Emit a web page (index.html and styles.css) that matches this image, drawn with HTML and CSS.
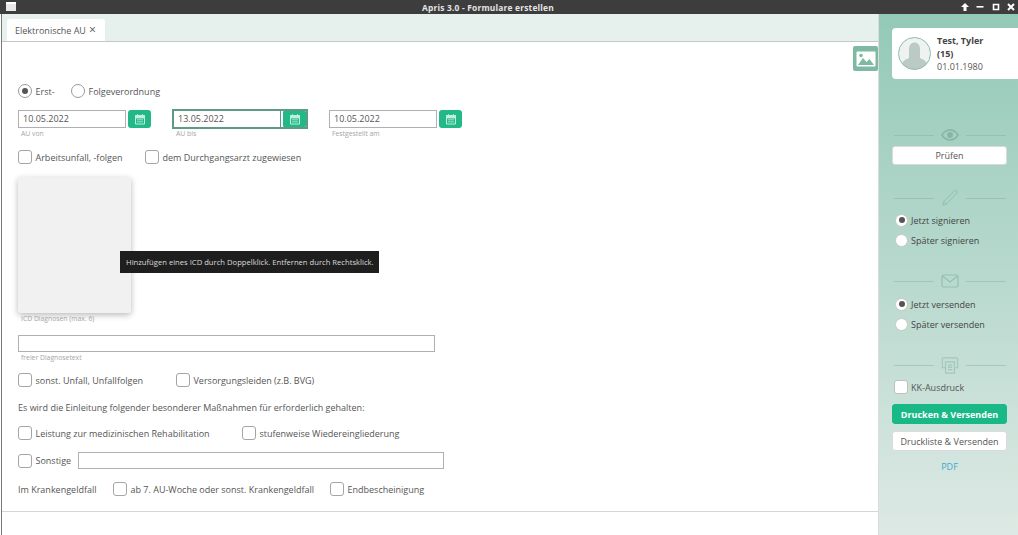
FILE: index.html
```html
<!DOCTYPE html>
<html lang="de">
<head>
<meta charset="utf-8">
<title>Apris 3.0 - Formulare erstellen</title>
<link rel="stylesheet" href="styles.css">
</head>
<body>
<header class="titlebar">
  <span class="win-icon"></span>
  <span class="win-title">Apris 3.0 - Formulare erstellen</span>
  <div class="win-controls">
    <svg width="10" height="10" viewBox="0 0 10 10"><path d="M5 1 9 5H6.500V9h-3V5H1z" fill="#fff"/></svg>
    <svg width="10" height="10" viewBox="0 0 10 10"><rect x="1.500" y="4" width="7" height="1.600" fill="#fff"/></svg>
    <svg width="10" height="10" viewBox="0 0 10 10"><path d="M2.500 2.500h5v5h-5z" fill="none" stroke="#fff" stroke-width="1.600"/></svg>
    <svg width="10" height="10" viewBox="0 0 10 10"><path d="M2 2 8 8M8 2 2 8" stroke="#fff" stroke-width="2"/></svg>
  </div>
</header>
<div class="app">
  <main class="main">
    <div class="tabbar"><div class="tab">Elektronische AU <span class="tab-x">×</span></div></div>
    <div class="form">
      <button class="image-btn" aria-label="Bild">
        <svg width="20" height="16" viewBox="0 0 20 16"><rect x="0.500" y="0.500" width="19" height="15" rx="1" fill="#fff"/><path d="M2 14 7 7l3.500 4 3-3L18 14z" fill="#7fb9a4"/><circle cx="5" cy="4.500" r="1.800" fill="#7fb9a4"/></svg>
      </button>

      <div class="row row-radio">
        <label class="opt w-53"><span class="radio on"></span>Erst-</label>
        <label class="opt"><span class="radio"></span>Folgeverordnung</label>
      </div>

      <div class="row row-dates">
        <div class="date">
          <div class="date-line"><div class="input date-input">10.05.2022</div><span class="cal"><svg width="12" height="12" viewBox="0 0 12 12"><use href="#cal"/></svg></span></div>
          <div class="caption">AU von</div>
        </div>
        <div class="date date-focus">
          <div class="date-line focus"><div class="input date-input">13.05.2022</div><span class="cal"><svg width="12" height="12" viewBox="0 0 12 12"><use href="#cal"/></svg></span></div>
          <div class="caption">AU bis</div>
        </div>
        <div class="date date-third">
          <div class="date-line"><div class="input date-input">10.05.2022</div><span class="cal"><svg width="12" height="12" viewBox="0 0 12 12"><use href="#cal"/></svg></span></div>
          <div class="caption">Festgestellt am</div>
        </div>
      </div>

      <div class="row row-check1">
        <label class="opt w-127"><span class="check"></span>Arbeitsunfall, -folgen</label>
        <label class="opt"><span class="check"></span>dem Durchgangsarzt zugewiesen</label>
      </div>

      <div class="icd"></div>
      <div class="caption caption-icd">ICD Diagnosen (max. 6)</div>

      <div class="input free-input"></div>
      <div class="caption">freier Diagnosetext</div>

      <div class="row row-check2">
        <label class="opt w-158"><span class="check"></span>sonst. Unfall, Unfallfolgen</label>
        <label class="opt"><span class="check"></span>Versorgungsleiden (z.B. BVG)</label>
      </div>

      <p class="statement">Es wird die Einleitung folgender besonderer Maßnahmen für erforderlich gehalten:</p>

      <div class="row row-check3">
        <label class="opt w-224"><span class="check"></span>Leistung zur medizinischen Rehabilitation</label>
        <label class="opt"><span class="check"></span>stufenweise Wiedereingliederung</label>
      </div>

      <div class="row row-check4">
        <label class="opt w-60"><span class="check"></span>Sonstige</label>
        <div class="input other-input"></div>
      </div>

      <div class="row row-check5">
        <span class="kg-label">Im Krankengeldfall</span>
        <label class="opt w-217"><span class="check"></span>ab 7. AU-Woche oder sonst. Krankengeldfall</label>
        <label class="opt"><span class="check"></span>Endbescheinigung</label>
      </div>

      <div class="tooltip">Hinzufügen eines ICD durch Doppelklick. Entfernen durch Rechtsklick.</div>
    </div>
    <div class="footer-line"></div>
  </main>

  <aside class="side">
    <div class="patient">
      <svg class="avatar" width="33" height="33" viewBox="0 0 33 33"><defs><clipPath id="av"><circle cx="16.500" cy="16.500" r="16"/></clipPath></defs><circle cx="16.500" cy="16.500" r="16" fill="#eef3f1"/><g clip-path="url(#av)" fill="#bccac5"><path d="M11 21v-9c0-4 2.500-6.500 5.500-6.500S22 8 22 12v9z"/><ellipse cx="16.500" cy="29" rx="13" ry="9"/></g><circle cx="16.500" cy="16.500" r="16" fill="none" stroke="#8dbcab"/></svg>
      <div class="patient-text"><b>Test, Tyler</b><b>(15)</b><span>01.01.1980</span></div>
    </div>

    <div class="divider d-eye"><svg width="18" height="14" viewBox="0 0 20 14" fill="none" stroke="#86b5a4" stroke-width="1.600"><path d="M1 7c2.500-3.700 5.500-5.500 9-5.500S16.500 3.300 19 7c-2.500 3.700-5.500 5.500-9 5.500S3.500 10.700 1 7z"/><circle cx="10" cy="7" r="3.200" fill="#86b5a4" stroke="none"/></svg></div>
    <button class="btn btn-check">Prüfen</button>

    <div class="divider d-pen"><svg width="18" height="18" viewBox="0 0 18 18" fill="none" stroke="#93c0b0" stroke-width="1"><path d="M13.500 1.500c.8-.6 1.500-.5 2.200.2s.8 1.500.2 2.200L5.500 15l-3.800 1.300L2.900 12.500z"/><path d="M2.900 12.500 5.500 15"/></svg></div>
    <label class="opt side-opt first"><span class="radio on"></span>Jetzt signieren</label>
    <label class="opt side-opt"><span class="radio"></span>Später signieren</label>

    <div class="divider d-mail"><svg width="18" height="14" viewBox="0 0 18 14" fill="none" stroke="#93c0b0" stroke-width="1.200"><rect x="1" y="1" width="16" height="12" rx="1.500"/><path d="M1.500 2 9 8l7.500-6"/></svg></div>
    <label class="opt side-opt first"><span class="radio on"></span>Jetzt versenden</label>
    <label class="opt side-opt"><span class="radio"></span>Später versenden</label>

    <div class="divider d-print"><svg width="18" height="19" viewBox="0 0 20 19" fill="none" stroke="#a3c8ba" stroke-width="1.300"><path d="M5 12H1.500V2.500c0-1 .5-1.500 1.500-1.500h14c1 0 1.500.5 1.500 1.500V12H15"/><path d="M5 5.500h10V18H5z"/><path d="M7.500 9h5M7.500 11.500h5M7.500 14h5"/></svg></div>
    <label class="opt kk"><span class="check"></span>KK-Ausdruck</label>
    <button class="btn btn-primary">Drucken &amp; Versenden</button>
    <button class="btn btn-list">Druckliste &amp; Versenden</button>
    <a class="pdf">PDF</a>
  </aside>
</div>
<svg class="defs" width="0" height="0"><symbol id="cal" viewBox="0 0 12 12"><path d="M1.500 2.500h9v8.500h-9z" fill="none" stroke="#bff0dc" stroke-width="1"/><path d="M1.500 2.500h9V5h-9zM3.500 1v2M8.500 1v2" fill="#bff0dc" stroke="#bff0dc" stroke-width=".8"/><path d="M3 6.800h6M3 8.800h6" stroke="#bff0dc" stroke-width=".8"/></symbol></svg>
</body>
</html>
```
FILE: styles.css
```css
* { box-sizing: border-box; }
html, body { margin: 0; height: 535px; overflow: hidden; }
body { font-family: "Open Sans", sans-serif; font-size: 9px; color: #555; background: #fff; }

.titlebar { height: 14px; background: #3d3d3d; display: flex; align-items: center; justify-content: center; position: relative; color: #e4e4e4; padding-right: 42px; }
.win-title { font-weight: 700; font-size: 8.400px; letter-spacing: .2px; }
.win-icon { position: absolute; left: 6px; top: 2px; width: 10px; height: 9px; background: #e8e8e8; border-top: 2px solid #fff; }
.win-controls { position: absolute; right: 2px; top: 2px; display: flex; gap: 5.500px; }

.app { display: flex; height: 521px; }
.main { flex: 0 0 878px; margin-left: 1px; border-left: 1px solid #777; border-right: 1px solid #dcdcdc; display: flex; flex-direction: column; }
.tabbar { height: 28px; background: #e6f0ec; border-bottom: 1px solid #c6c6c6; padding: 5px 0 0 5px; }
.tab { width: 98px; height: 22px; background: #fff; border-radius: 3px 3px 0 0; display: flex; align-items: center; gap: 3px; padding-left: 8px; }
.tab-x { font-size: 12px; line-height: 12px; }

.form { position: relative; flex: none; height: 469px; padding: 43px 0 0 16px; }
.row { display: flex; align-items: center; }
.opt { display: inline-flex; align-items: center; gap: 3.500px; white-space: nowrap; }
.radio { width: 14px; height: 14px; border-radius: 50%; background: #fff; border: 1px solid #9a9a9a; flex: none; display: flex; align-items: center; justify-content: center; }
.radio.on::after { content: ""; width: 6px; height: 6px; border-radius: 50%; background: #555; }
.check { width: 14px; height: 14px; border-radius: 3px; background: #fff; border: 1px solid #a5a5a5; flex: none; }

.image-btn { position: absolute; left: 851px; top: 4px; width: 25px; height: 25px; padding: 0; border: 0; border-radius: 2px; background: #7fb9a4; display: flex; align-items: center; justify-content: center; }

.row-radio { height: 14px; margin-top: -1px; }
.w-53 { width: 53px; }

.row-dates { margin-top: 12px; }
.date { width: 133px; }
.date-focus { width: 134px; margin-left: 22px; }
.date-third { margin-left: 22px; }
.date-line { display: flex; gap: 2px; height: 18px; }
.date-input { width: 108px; height: 18px; padding-left: 4px; }
.input { background: #fff; border: 1px solid #b0b0b0; line-height: 16px; color: #555; }
.cal { width: 23px; height: 18px; background: #22b888; border-radius: 3px; display: flex; align-items: center; justify-content: center; }
.focus { outline: 2px solid #5f9a84; outline-offset: -1px; }
.focus .date-input { border-color: #5f9a84; }
.caption { font-size: 6.800px; line-height: 9px; color: #a5a5a5; padding-left: 3px; margin-top: 1px; }

.row-check1 { height: 14px; margin-top: 12px; }
.w-127 { width: 127px; }
.w-158 { width: 158px; }
.w-224 { width: 224px; }
.w-217 { width: 217px; }
.w-60 { width: 60px; }

.icd { width: 113px; height: 136px; margin-top: 13px; background: #f1f1f1; border-radius: 3px; box-shadow: 0 2px 6px rgba(0,0,0,.28); }
.caption-icd { margin-top: 1px; }

.free-input { width: 417px; height: 17px; margin-top: 12px; }

.row-check2 { height: 14px; margin-top: 11px; }
.statement { margin: 14px 0 0; line-height: 14px; }
.row-check3 { height: 14px; margin-top: 11px; }
.row-check4 { height: 17px; margin-top: 12px; }
.other-input { width: 366px; height: 17px; }
.row-check5 { height: 14px; margin-top: 13px; }
.kg-label { width: 95px; }

.tooltip { position: absolute; left: 118px; top: 209px; height: 22px; padding: 0 5px 0 6px; background: #1e1e1e; color: #dcdcdc; font-size: 7.650px; line-height: 22px; white-space: nowrap; }
.footer-line { border-top: 1px solid #d6d6d6; }
.defs { position: absolute; }

.side { flex: 1; background: linear-gradient(#93c9b7, #dde9e4); display: flex; flex-direction: column; align-items: flex-start; padding: 14px 0 0 13px; }
.patient { align-self: stretch; height: 51px; background: #fff; border-radius: 4px 0 0 4px; display: flex; align-items: center; gap: 6px; padding-left: 6px; }
.avatar { flex: none; }
.patient-text { display: flex; flex-direction: column; line-height: 13px; }
.patient-text b { color: #444; font-weight: 700; }

.divider { width: 115px; display: flex; align-items: center; justify-content: center; gap: 7px; flex: none; }
.divider::before, .divider::after { content: ""; width: 40px; height: 1px; background: rgba(110,165,145,.35); }
.d-eye { height: 14px; margin-top: 49px; }
.d-pen { height: 26px; margin-top: 20px; }
.d-mail { height: 14px; margin-top: 24px; }
.d-print { height: 19px; margin-top: 22px; }

.btn { font-family: inherit; font-size: 9px; border-radius: 3px; border: 1px solid #dadada; background: #fff; color: #555; width: 115px; padding: 0; flex: none; }
.btn-check { height: 19px; margin-top: 4px; }
.btn-primary { height: 20px; margin-top: 10px; background: #18b987; border-color: #18b987; color: #fff; font-weight: 700; }
.btn-list { height: 20px; margin-top: 7px; }

.side-opt { height: 20px; color: #444; gap: 3px; }
.side-opt .radio { border-color: #c8c8c8; width: 13px; height: 13px; margin-left: 3px; }
.first { margin-top: -1px; }
.d-mail + .first { margin-top: 6px; }
.kk { height: 14px; margin-top: 5px; margin-left: 2px; gap: 3px; }
.kk .check { border-color: #c0c0c0; }
.pdf { align-self: flex-start; width: 115px; text-align: center; margin-top: 9px; color: #3ba7d5; line-height: 14px; }
```
